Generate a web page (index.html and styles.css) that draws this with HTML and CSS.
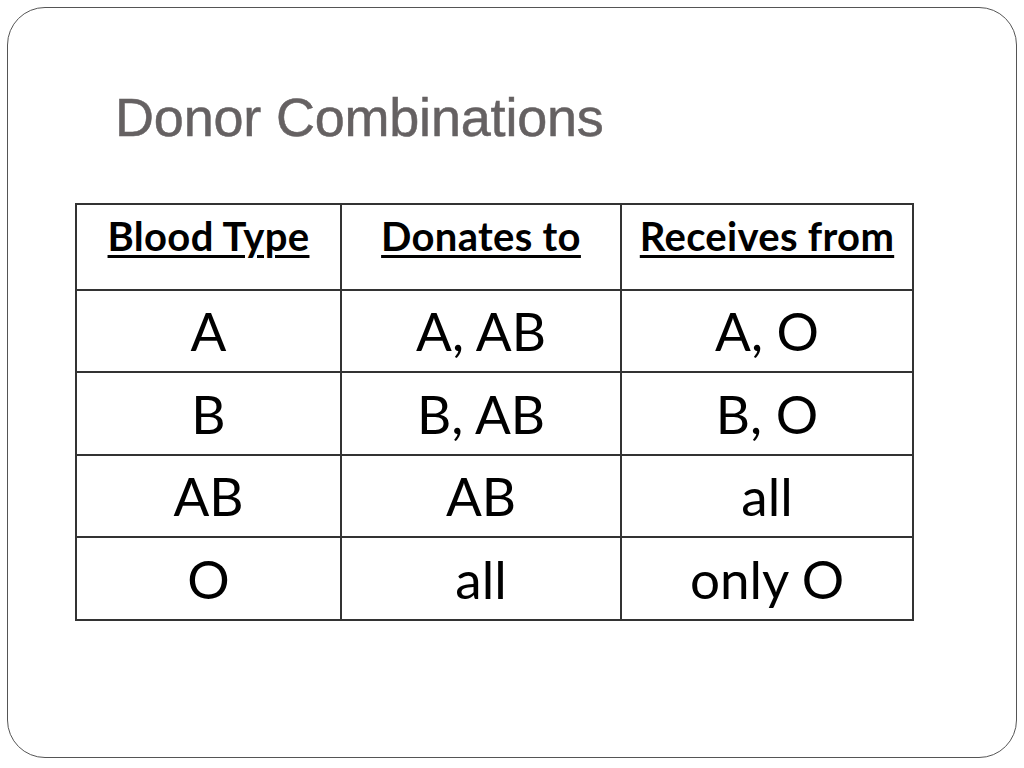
FILE: index.html
```html
<!DOCTYPE html>
<html>
<head>
<meta charset="utf-8">
<link rel="stylesheet" href="styles.css">
</head>
<body>
<div class="slide">
  <h1 class="title">Donor Combinations</h1>
  <table class="donors">
    <colgroup>
      <col class="c1"><col class="c2"><col class="c3">
    </colgroup>
    <thead>
      <tr class="head">
        <th><span>Blood Type</span></th>
        <th><span>Donates to</span></th>
        <th><span>Receives from</span></th>
      </tr>
    </thead>
    <tbody>
      <tr class="r-a"><td>A</td><td>A, AB</td><td>A, O</td></tr>
      <tr class="r-b"><td>B</td><td>B, AB</td><td>B, O</td></tr>
      <tr class="r-a"><td>AB</td><td>AB</td><td>all</td></tr>
      <tr class="r-b"><td>O</td><td>all</td><td>only O</td></tr>
    </tbody>
  </table>
</div>
</body>
</html>
```

FILE: styles.css
```css
html, body {
  margin: 0;
  padding: 0;
  background: #ffffff;
}
.slide {
  margin: 7px;
  width: 1008px;
  height: 749px;
  border: 1px solid #555555;
  border-radius: 38px;
  box-sizing: content-box;
  overflow: hidden;
}
.title {
  margin: 79px 0 0 107px;
  font-family: "Liberation Sans", Arial, sans-serif;
  font-weight: normal;
  font-size: 54px;
  line-height: 60px;
  letter-spacing: -0.2px;
  color: #656162;
  -webkit-text-stroke: 0.5px #656162;
}
.donors {
  margin: 56px 0 0 67px;
  border-collapse: collapse;
  table-layout: fixed;
  width: 837px;
  font-family: Lato, "Open Sans", sans-serif;
  color: #000;
}
.c1 { width: 265px; }
.c2 { width: 280px; }
.c3 { width: 292px; }
.donors th, .donors td {
  border: 2px solid #333333;
  text-align: center;
  padding: 0;
}
.head th {
  height: 86px;
  vertical-align: top;
  font-size: 40px;
  font-weight: bold;
  letter-spacing: 0.3px;
  line-height: 46px;
  padding-top: 8px;
  box-sizing: border-box;
}
.head th span {
  text-decoration: underline;
  text-decoration-thickness: 3px;
  text-underline-offset: 4px;
}
.donors td {
  font-size: 53px;
  line-height: 60px;
  vertical-align: middle;
}
.r-a td { height: 80px; }
.r-b td { height: 81px; }
```
